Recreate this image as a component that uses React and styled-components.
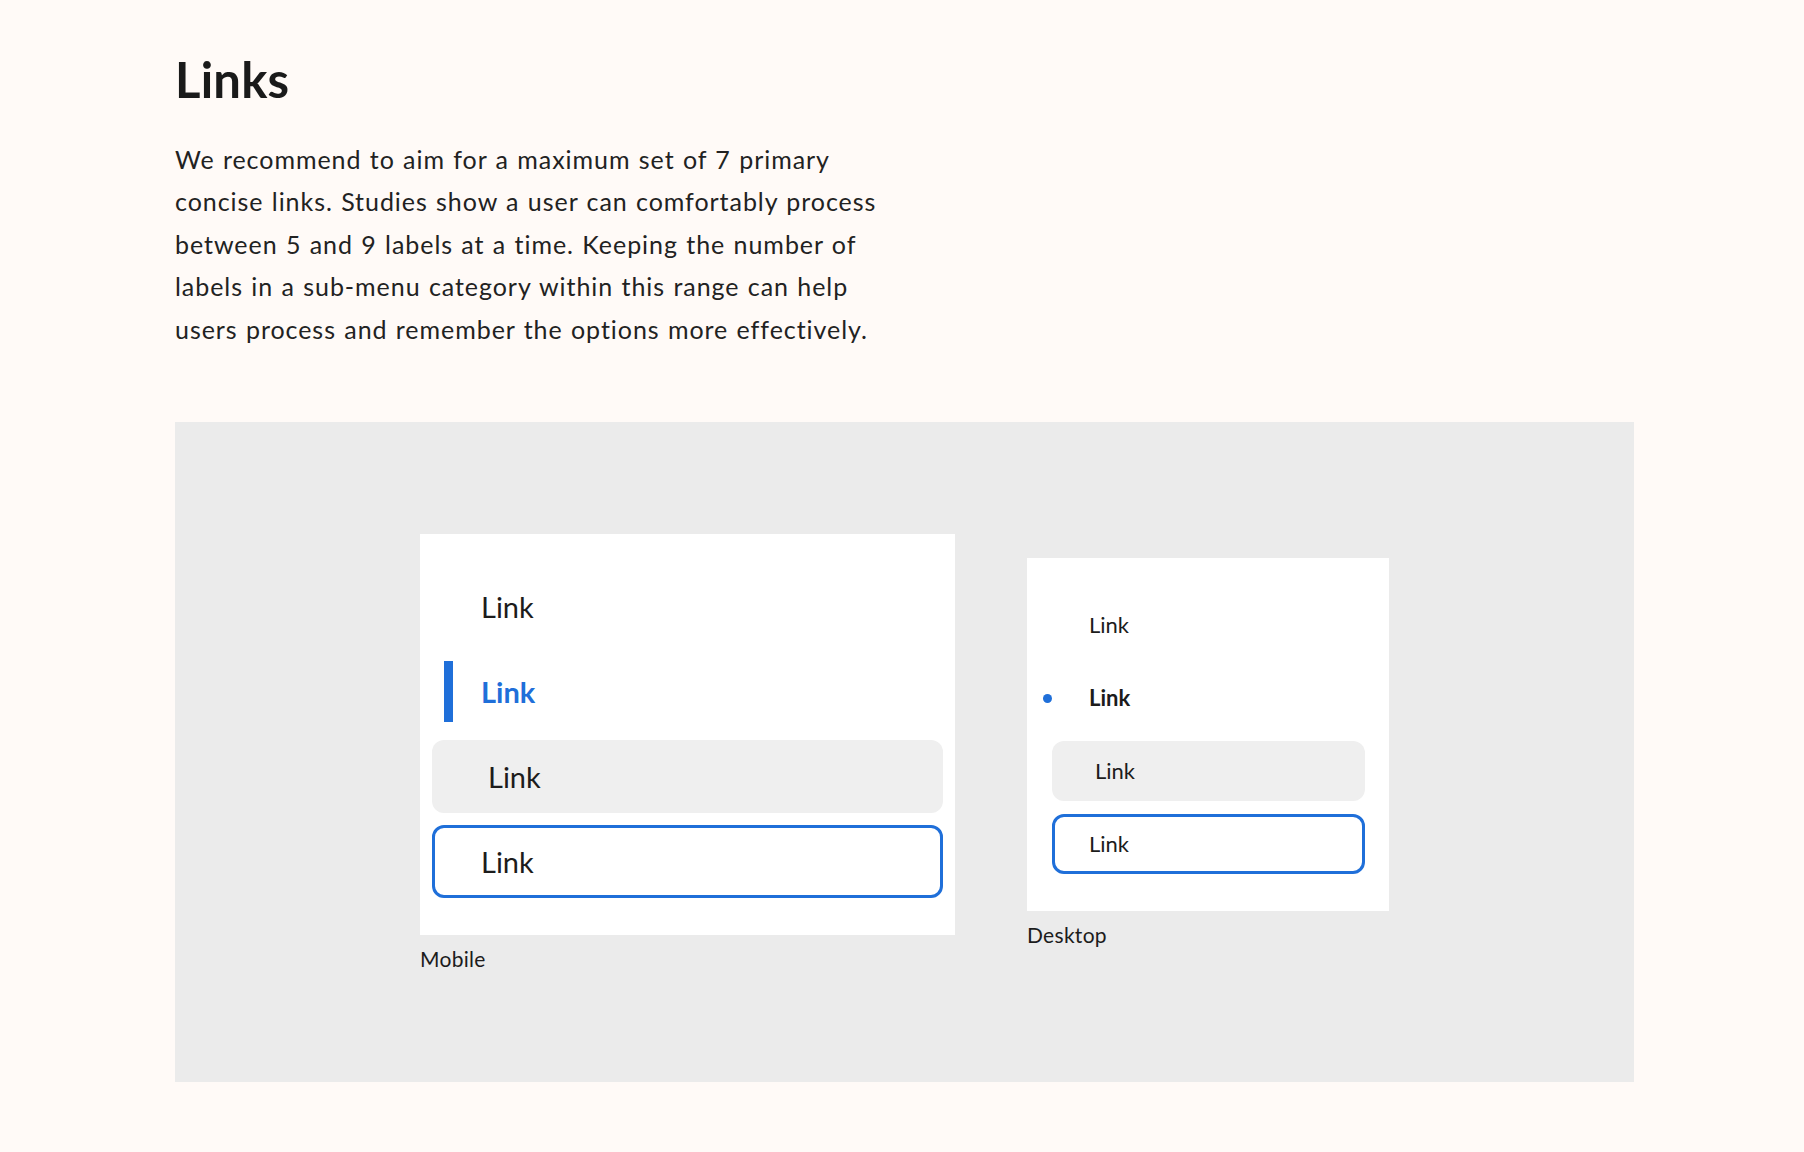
import React from "react";
import styled, { createGlobalStyle, css } from "styled-components";

const GlobalStyle = createGlobalStyle`
  html, body {
    margin: 0;
    padding: 0;
    background: #fffaf7;
  }
  body {
    font-family: Lato, "Open Sans", Arial, sans-serif;
    color: #1c1c1c;
    -webkit-font-smoothing: antialiased;
  }
`;

const BLUE = "#1f6fd9";

const Page = styled.main`
  box-sizing: border-box;
  width: 1804px;
  min-height: 1152px;
  padding: 50px 0 70px 175px;
`;

const Title = styled.h1`
  margin: 0;
  font-size: 49px;
  line-height: 1.2;
  font-weight: 700;
  letter-spacing: 0.2px;
  color: #1a1a1a;
`;

const Lead = styled.p`
  margin: 29px 0 0;
  width: 780px;
  font-size: 25px;
  line-height: 42.5px;
  font-weight: 400;
  letter-spacing: 0.95px;
  word-spacing: 1px;
  color: #222;
`;

const Stage = styled.section`
  margin-top: 72px;
  width: 1459px;
  height: 660px;
  background: #ebebeb;
  display: flex;
  align-items: center;
  justify-content: center;
  gap: 72px;
`;

const Example = styled.figure`
  margin: 0;
  display: flex;
  flex-direction: column;
`;

const Card = styled.ul`
  list-style: none;
  margin: 0;
  background: #ffffff;
  display: flex;
  flex-direction: column;
  ${({ $size }) =>
    $size === "mobile"
      ? css`
          width: 535px;
          padding: 36px 12px 37px;
          gap: 12px;
        `
      : css`
          width: 362px;
          padding: 37px 24px 37px 25px;
          gap: 13px;
        `}
  box-sizing: border-box;
`;

const Item = styled.li`
  position: relative;
  box-sizing: border-box;
  display: flex;
  align-items: center;
  border-radius: 12px;
  font-size: ${({ $size }) => ($size === "mobile" ? "29px" : "22px")};
  height: ${({ $size }) => ($size === "mobile" ? "73px" : "60px")};
  padding-left: ${({ $size }) => ($size === "mobile" ? "49px" : "37px")};
  color: #1c1c1c;

  ${({ $state, $size }) =>
    $state === "active" &&
    $size === "mobile" &&
    css`
      color: ${BLUE};
      font-weight: 700;
      &::before {
        content: "";
        position: absolute;
        left: 12px;
        top: 6px;
        bottom: 6px;
        width: 9px;
        background: ${BLUE};
      }
    `}

  ${({ $state, $size }) =>
    $state === "active" &&
    $size === "desktop" &&
    css`
      font-weight: 700;
      &::before {
        content: "";
        position: absolute;
        left: -9px;
        top: 50%;
        width: 9px;
        height: 9px;
        margin-top: -4px;
        border-radius: 50%;
        background: ${BLUE};
      }
    `}

  ${({ $state, $size }) =>
    $state === "hover" &&
    css`
      background: #efefef;
      padding-left: ${$size === "mobile" ? "56px" : "43px"};
    `}

  ${({ $state, $size }) =>
    $state === "focus" &&
    css`
      border: 3px solid ${BLUE};
      padding-left: ${$size === "mobile" ? "46px" : "34px"};
    `}
`;

const Caption = styled.figcaption`
  margin-top: 11px;
  font-size: 21px;
  line-height: 1.2;
  letter-spacing: 0.3px;
  color: #1c1c1c;
`;

const states = ["default", "active", "hover", "focus"];

function LinkList({ size, label }) {
  return (
    <Example>
      <Card $size={size}>
        {states.map((s) => (
          <Item key={s} $size={size} $state={s}>
            Link
          </Item>
        ))}
      </Card>
      <Caption>{label}</Caption>
    </Example>
  );
}

export default function App() {
  return (
    <>
      <GlobalStyle />
      <Page>
        <Title>Links</Title>
        <Lead>
          We recommend to aim for a maximum set of 7 primary
          <br />
          concise links. Studies show a user can comfortably process
          <br />
          between 5 and 9 labels at a time. Keeping the number of
          <br />
          labels in a sub-menu category within this range can help
          <br />
          users process and remember the options more effectively.
        </Lead>
        <Stage>
          <LinkList size="mobile" label="Mobile" />
          <LinkList size="desktop" label="Desktop" />
        </Stage>
      </Page>
    </>
  );
}
